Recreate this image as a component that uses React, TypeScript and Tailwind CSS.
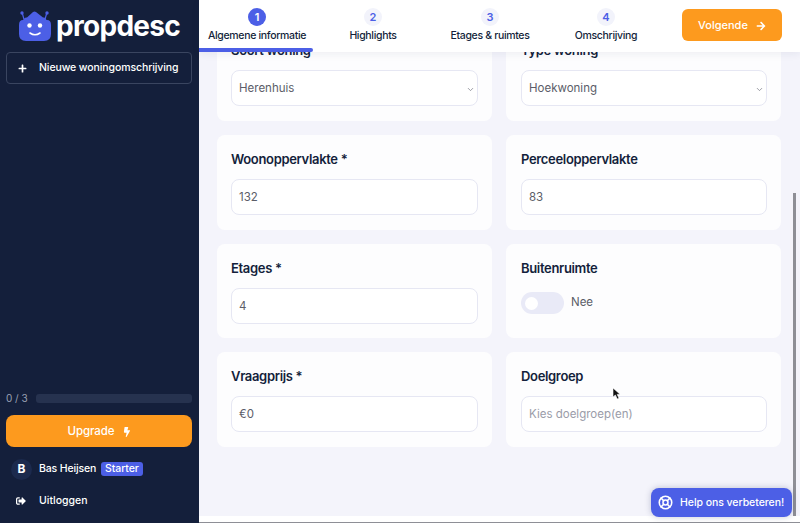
import { ChevronDown, LifeBuoy } from "lucide-react";
import { FaPlus, FaArrowRight, FaBolt, FaSignOutAlt } from "react-icons/fa";

const font = "font-['Inter','Noto_Sans',sans-serif]";

function Logo() {
  return (
    <svg width="34" height="32" viewBox="0 0 34 32" className="shrink-0">
      <circle cx="4" cy="3" r="1.7" fill="#4c5fe6" />
      <circle cx="29" cy="3" r="1.7" fill="#4c5fe6" />
      <path d="M4.2 3 L6.5 11 M28.8 3 L26.5 11" stroke="#4c5fe6" strokeWidth="1.2" />
      <path d="M15 2 Q16.5 1 18 2 L25 7.5 H26 Q28 7.5 28.5 10 H29 Q33 10 33 15 V24 Q33 31 26 31 H8 Q1 31 1 24 V15 Q1 10 5 10 H5.5 Q6 7.5 8 7.5 H9 Z" fill="#4c5fe6" />
      <circle cx="11.5" cy="15.5" r="2.2" fill="#fff" />
      <circle cx="22" cy="15.5" r="2.2" fill="#fff" />
      <path d="M12 23 Q17 26.5 22 23" stroke="#fff" strokeWidth="1.6" fill="none" strokeLinecap="round" />
    </svg>
  );
}

function Step({ n, label, active, w }: { n: number; label: string; active?: boolean; w: string }) {
  return (
    <div className={`relative flex h-[52px] flex-col items-center pt-[8px] ${w}`}>
      <div className={`flex h-[18px] w-[18px] items-center justify-center rounded-full text-[11px] font-semibold ${active ? "bg-[#4c5fe6] text-white" : "bg-[#f2f3fb] text-[#4c5fe6]"}`}>{n}</div>
      <div className="text-[10.5px] leading-[20px] font-medium tracking-[-0.33px] whitespace-nowrap text-[#141f3b]">{label}</div>
      {active && <div className="absolute bottom-0 left-0 h-[4px] w-[114px] rounded-r-sm bg-[#4c5fe6]" />}
    </div>
  );
}

function Card({ label, children, className = "h-[95px]", right }: { label: string; children: React.ReactNode; className?: string; right?: boolean }) {
  return (
    <div className={`rounded-[8px] bg-[#fdfdfe] pt-[14px] pr-[14px] ${right ? "pl-[15px]" : "pl-[14px]"} ${className}`}>
      <div className="text-[13px] leading-[20px] font-semibold tracking-[-0.33px] text-[#141f3b]">{label}</div>
      <div className="mt-[10px]">{children}</div>
    </div>
  );
}

function Field({ value, placeholder, select }: { value?: string; placeholder?: boolean; select?: boolean }) {
  return (
    <div className={`flex h-[36px] items-center justify-between rounded-[8px] border border-[#e6e7f3] bg-white pt-[2px] pr-[1px] pl-[7px] text-[11.5px] ${select ? "mt-[1px]" : ""} ${placeholder ? "text-[#9a9ca8]" : "text-[#5b5d68]"}`}>
      <span>{value}</span>
      {select && <ChevronDown size={9} strokeWidth={2} className="mr-[1px] text-[#7c7e88]" />}
    </div>
  );
}

export default function App() {
  return (
    <div className={`flex h-[523px] w-[800px] overflow-hidden bg-[#f4f4fb] ${font}`}>
      <aside className="flex w-[199px] shrink-0 flex-col bg-[#141f3b] pr-[7px] pb-[11px] pl-[6px] text-white">
        <div className="flex h-[52px] items-center gap-[4px] pl-[12px]">
          <Logo />
          <span className="text-[28px] leading-none font-bold tracking-[-0.7px]">propdesc</span>
        </div>
        <button className="flex h-[32px] items-center rounded-[4px] border border-[#3a4560] text-[10.5px] font-medium tracking-[-0.1px]">
          <FaPlus size={9} className="ml-[11px]" />
          <span className="ml-[12px] whitespace-nowrap">Nieuwe woningomschrijving</span>
        </button>
        <div className="flex-1" />
        <div className="flex h-[9px] items-center gap-[8px]">
          <span className="text-[10px] leading-[9px] whitespace-nowrap text-[#9aa1b3]">0 / 3</span>
          <div className="h-[9px] flex-1 rounded-[3px] bg-[#26324f]" />
        </div>
        <button className="mt-[12px] flex h-[32px] items-center justify-center gap-[8px] rounded-[8px] bg-[#fd9a1e] pt-[1px] pl-[2px] text-[11.5px] font-medium tracking-[-0.1px]">
          Upgrade <FaBolt size={10} />
        </button>
        <div className="mt-[11px] flex h-[22px] items-center">
          <div className="ml-[5px] flex h-[21px] w-[21px] items-center justify-center rounded-full bg-[#1c2a4d] text-[12px] font-bold">B</div>
          <span className="ml-[7px] text-[10.5px] font-medium tracking-[-0.15px] whitespace-nowrap">Bas Heijsen</span>
          <span className="ml-[5px] rounded-[3px] bg-[#4c5fe6] px-[4px] text-[10.5px] leading-[14px] font-medium tracking-[-0.1px]">Starter</span>
        </div>
        <div className="mt-[10px] flex h-[22px] items-center">
          <FaSignOutAlt size={10} className="ml-[10px]" />
          <span className="ml-[13px] text-[10.5px] font-medium">Uitloggen</span>
        </div>
      </aside>

      <main className="relative flex min-w-0 flex-1 flex-col">
        <header className="relative z-10 flex h-[52px] shrink-0 items-start bg-white shadow-[0_2px_8px_rgba(30,40,90,0.07)]">
          <Step n={1} label="Algemene informatie" active w="w-[116px]" />
          <Step n={2} label="Highlights" w="w-[116px]" />
          <Step n={3} label="Etages & ruimtes" w="w-[118px]" />
          <Step n={4} label="Omschrijving" w="w-[114px]" />
          <button className="mt-[9px] ml-[19px] flex h-[32px] w-[100px] items-center justify-center gap-[8px] rounded-[6px] bg-[#fd9a1e] pt-[1px] text-[11px] font-medium text-white">
            Volgende <FaArrowRight size={10} />
          </button>
        </header>
        <div className="relative flex-1 overflow-hidden">
          <div className="-mt-[26px] ml-[18px] grid w-[564px] grid-cols-2 gap-[14px]">
            <Card label="Soort woning"><Field value="Herenhuis" select /></Card>
            <Card label="Type woning" right><Field value="Hoekwoning" select /></Card>
            <Card label="Woonoppervlakte *"><Field value="132" /></Card>
            <Card label="Perceeloppervlakte" right><Field value="83" /></Card>
            <Card label="Etages *" className="h-[94px]"><Field value="4" /></Card>
            <Card label="Buitenruimte" className="h-[94px]" right>
              <div className="flex items-center gap-[7px] pt-[4px]">
                <div className="flex h-[22px] w-[43px] items-center rounded-full bg-[#e9eaf7] pl-[4px]">
                  <div className="h-[13px] w-[13px] rounded-full bg-white" />
                </div>
                <span className="text-[11.5px] text-[#5b5d68]">Nee</span>
              </div>
            </Card>
            <Card label="Vraagprijs *"><Field value="€0" /></Card>
            <Card label="Doelgroep" right><Field value="Kies doelgroep(en)" placeholder /></Card>
          </div>
          <div className="absolute top-[141px] right-[4px] bottom-[7px] w-[3px] bg-[#8e8f96]" />
          <div className="absolute right-0 bottom-0 left-0 h-[7px] border-b border-[#8e8f96] bg-white" />
          <button className="absolute right-[8px] bottom-[6px] flex h-[29px] w-[141px] items-center gap-[7px] rounded-[8px] bg-[#4c5fe6] pl-[7px] text-[10.5px] font-medium tracking-[-0.05px] whitespace-nowrap text-white shadow-[0_0_6px_rgba(30,40,90,0.25)]">
            <LifeBuoy size={15} strokeWidth={2.5} /> Help ons verbeteren!
          </button>
          <svg width="10" height="14" viewBox="0 0 10 14" className="absolute top-[335px] left-[413px]">
            <path d="M1 1 L1 10 L3.4 8 L5.2 12 L7 11.2 L5.2 7.4 L8 7.2 Z" fill="#111" stroke="#fff" strokeWidth="0.6" />
          </svg>
        </div>
      </main>
    </div>
  );
}
